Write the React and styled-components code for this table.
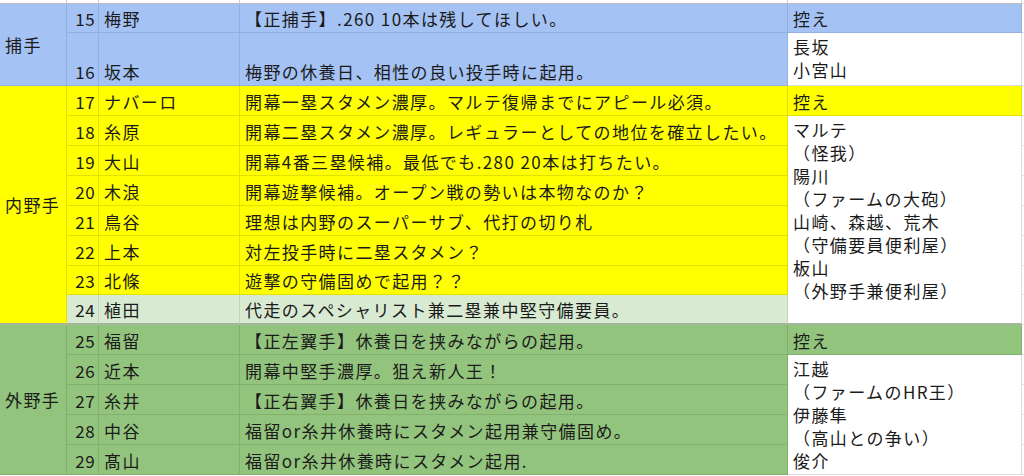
import React from "react";
import styled, { createGlobalStyle } from "styled-components";

const GlobalStyle = createGlobalStyle`
  html, body {
    margin: 0;
    padding: 0;
    background: #ffffff;
    overflow: hidden;
  }
  body {
    font-family: "Noto Sans CJK JP", "Noto Sans", sans-serif;
    font-size: 17px;
    letter-spacing: 1.4px;
    color: #1b1b1b;
  }
`;

const tones = {
  blue: { bg: "#a4c2f4", line: "#93b0e0" },
  yellow: { bg: "#ffff00", line: "#e2e200" },
  green: { bg: "#93c47d", line: "#82b06d" },
  pale: { bg: "#d9ead3", line: "#c2d4bc" },
  white: { bg: "#ffffff", line: "#dadce0" },
};

const groups = [
  {
    label: "捕手",
    tone: "blue",
    players: [
      { no: 15, name: "梅野", note: "【正捕手】.260 10本は残してほしい。" },
      { no: 16, name: "坂本", note: "梅野の休養日、相性の良い投手時に起用。" },
    ],
    bench: ["長坂", "小宮山"],
  },
  {
    label: "内野手",
    tone: "yellow",
    heavy: true,
    players: [
      { no: 17, name: "ナバーロ", note: "開幕一塁スタメン濃厚。マルテ復帰までにアピール必須。" },
      { no: 18, name: "糸原", note: "開幕二塁スタメン濃厚。レギュラーとしての地位を確立したい。" },
      { no: 19, name: "大山", note: "開幕4番三塁候補。最低でも.280 20本は打ちたい。" },
      { no: 20, name: "木浪", note: "開幕遊撃候補。オープン戦の勢いは本物なのか？" },
      { no: 21, name: "鳥谷", note: "理想は内野のスーパーサブ、代打の切り札" },
      { no: 22, name: "上本", note: "対左投手時に二塁スタメン？" },
      { no: 23, name: "北條", note: "遊撃の守備固めで起用？？" },
      { no: 24, name: "植田", note: "代走のスペシャリスト兼二塁兼中堅守備要員。", tone: "pale" },
    ],
    bench: [
      "マルテ",
      "（怪我）",
      "陽川",
      "（ファームの大砲）",
      "山崎、森越、荒木",
      "（守備要員便利屋）",
      "板山",
      "（外野手兼便利屋）",
    ],
  },
  {
    label: "外野手",
    tone: "green",
    players: [
      { no: 25, name: "福留", note: "【正左翼手】休養日を挟みながらの起用。" },
      { no: 26, name: "近本", note: "開幕中堅手濃厚。狙え新人王！" },
      { no: 27, name: "糸井", note: "【正右翼手】休養日を挟みながらの起用。" },
      { no: 28, name: "中谷", note: "福留or糸井休養時にスタメン起用兼守備固め。" },
      { no: 29, name: "髙山", note: "福留or糸井休養時にスタメン起用." },
    ],
    bench: ["江越", "（ファームのHR王）", "伊藤隼", "（高山との争い）", "俊介"],
  },
];

// sheet row heights: top strip, then rows 15..29
const rowHeights = [4, 29, 53, 30, 30, 30, 30, 30, 30, 29, 30, 30, 30, 30, 30, 30];

const Sheet = styled.div`
  display: grid;
  grid-template-columns: 67px 32px 141px 548px 234px 1fr;
  width: 1024px;
`;

const Cell = styled.div`
  box-sizing: border-box;
  grid-row: ${(p) => p.$row} / span ${(p) => p.$rows || 1};
  grid-column: ${(p) => p.$col};
  background: ${(p) => tones[p.$tone].bg};
  border-right: 1px solid ${(p) => tones[p.$tone].line};
  border-bottom: ${(p) =>
    p.$heavy ? "2px solid #a3b69b" : `1px solid ${tones[p.$tone].line}`};
  display: flex;
  align-items: flex-end;
  padding: 0 5px 3px;
  line-height: 21px;
  white-space: nowrap;
  overflow: hidden;
  min-width: 0;
`;

const TopCell = styled(Cell)`
  border-right-color: #d0d0d0;
  border-bottom: 1px solid #bdbdbd;
  padding: 0;
`;

const GroupCell = styled(Cell)`
  align-items: center;
  padding: 0 5px;
`;

const NumCell = styled(Cell)`
  justify-content: flex-end;
  padding-right: 3px;
  letter-spacing: 0.4px;
`;

const BenchNote = styled(Cell)`
  flex-direction: column;
  align-items: flex-start;
  justify-content: flex-start;
  padding: 2px 5px 0;
  line-height: 23px;
`;

const Filler = styled(Cell)`
  border-right: none;
  border-bottom-color: #e2e2e2;
  padding: 0;
`;

function Group({ group, start }) {
  const { label, tone, players, bench, heavy } = group;
  const last = start + players.length - 1;
  return (
    <>
      <GroupCell $row={start} $rows={players.length} $col={1} $tone={tone} $heavy={heavy}>
        {label}
      </GroupCell>
      {players.map((pl, i) => {
        const row = start + i;
        const t = pl.tone || tone;
        const hv = heavy && row === last;
        return (
          <React.Fragment key={pl.no}>
            <NumCell $row={row} $col={2} $tone={t} $heavy={hv}>
              {pl.no}
            </NumCell>
            <Cell $row={row} $col={3} $tone={t} $heavy={hv}>
              {pl.name}
            </Cell>
            <Cell $row={row} $col={4} $tone={t} $heavy={hv}>
              {pl.note}
            </Cell>
            <Filler $row={row} $col={6} $tone="white" />
          </React.Fragment>
        );
      })}
      <Cell $row={start} $col={5} $tone={tone}>
        控え
      </Cell>
      <BenchNote $row={start + 1} $rows={players.length - 1} $col={5} $tone="white" $heavy={heavy}>
        {bench.map((line) => (
          <span key={line}>{line}</span>
        ))}
      </BenchNote>
    </>
  );
}

export default function App() {
  let start = 2;
  const placed = groups.map((g) => {
    const s = start;
    start += g.players.length;
    return { g, s };
  });
  return (
    <>
      <GlobalStyle />
      <Sheet style={{ gridTemplateRows: rowHeights.map((h) => `${h}px`).join(" ") }}>
        {[1, 2, 3, 4, 5].map((c) => (
          <TopCell key={c} $row={1} $col={c} $tone="white" />
        ))}
        <Filler $row={1} $col={6} $tone="white" />
        {placed.map(({ g, s }) => (
          <Group key={g.label} group={g} start={s} />
        ))}
      </Sheet>
    </>
  );
}
